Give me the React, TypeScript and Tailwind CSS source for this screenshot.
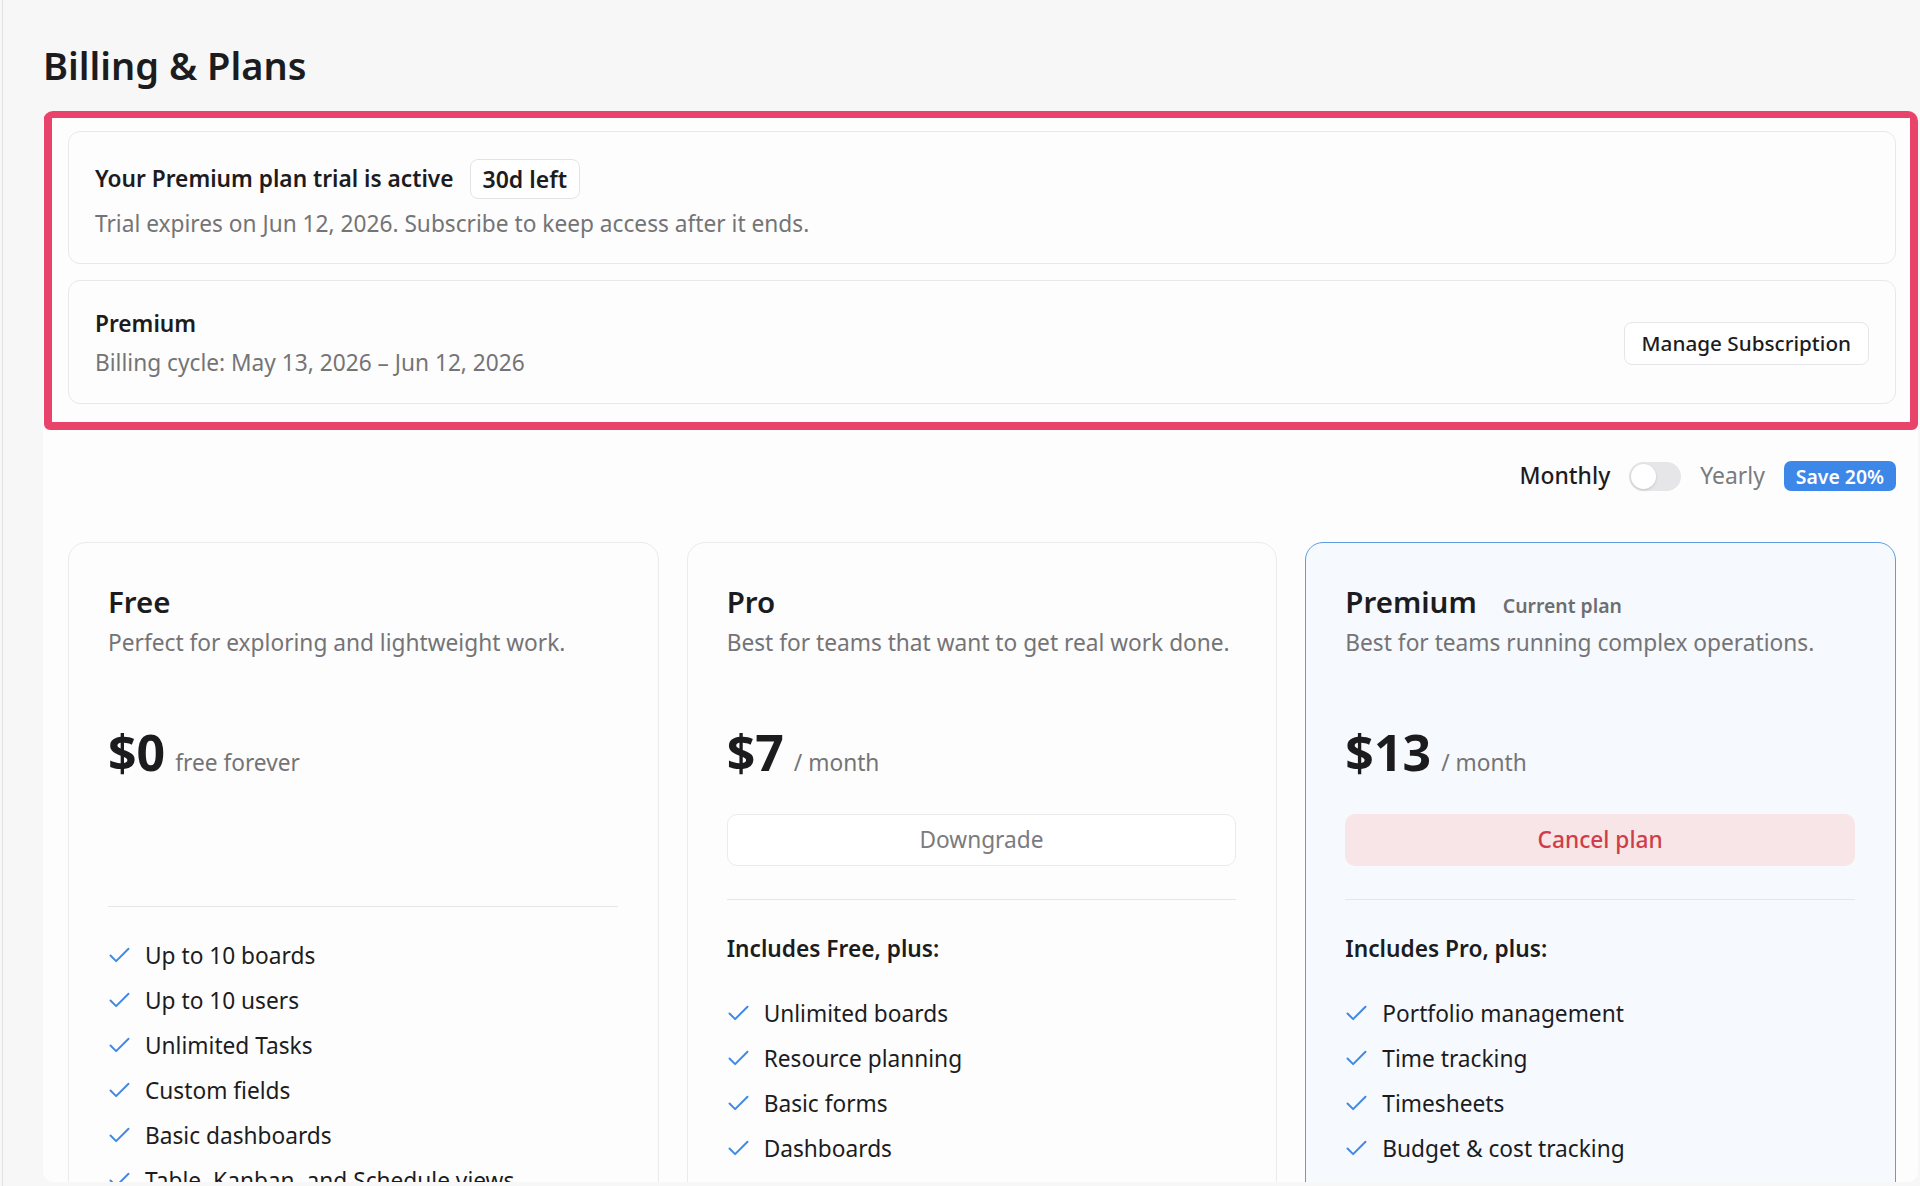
import { Check } from 'lucide-react';

type Plan = {
  name: string;
  desc: string;
  price: string;
  unit: string;
  current?: boolean;
  action?: 'downgrade' | 'cancel';
  includes?: string;
  features: string[];
};

const plans: Plan[] = [
  {
    name: 'Free',
    desc: 'Perfect for exploring and lightweight work.',
    price: '$0',
    unit: 'free forever',
    features: [
      'Up to 10 boards',
      'Up to 10 users',
      'Unlimited Tasks',
      'Custom fields',
      'Basic dashboards',
      'Table, Kanban, and Schedule views',
    ],
  },
  {
    name: 'Pro',
    desc: 'Best for teams that want to get real work done.',
    price: '$7',
    unit: '/ month',
    action: 'downgrade',
    includes: 'Includes Free, plus:',
    features: ['Unlimited boards', 'Resource planning', 'Basic forms', 'Dashboards', 'Automations'],
  },
  {
    name: 'Premium',
    desc: 'Best for teams running complex operations.',
    price: '$13',
    unit: '/ month',
    current: true,
    action: 'cancel',
    includes: 'Includes Pro, plus:',
    features: ['Portfolio management', 'Time tracking', 'Timesheets', 'Budget & cost tracking', 'Advanced reporting'],
  },
];

function PlanCard({ plan }: { plan: Plan }) {
  return (
    <div
      className={
        plan.current
          ? 'rounded-[18px] border-[1.5px] border-[#5d9ce0] bg-[#f6f9fd] pl-[39px] pr-10 pt-10 h-[700px]'
          : 'rounded-[18px] border border-[#ebebec] bg-[#fdfdfd] pl-[39px] pr-10 pt-10 h-[700px]'
      }
    >
      <div className="flex items-baseline gap-[26px]">
        <h3 className="text-[29.5px] leading-[38px] font-semibold text-[#1c1c1e]">{plan.name}</h3>
        {plan.current && <span className="text-[19.4px] font-semibold text-[#6e6e70]">Current plan</span>}
      </div>
      <p className="mt-[6px] text-[22.7px] leading-[32px] text-[#747476]">{plan.desc}</p>

      <div className="mt-[69px] flex items-baseline gap-[10px]">
        <span className="text-[50px] leading-[48px] font-bold text-[#1c1c1e]">{plan.price}</span>
        <span className="text-[22.7px] text-[#747476]">{plan.unit}</span>
      </div>

      {plan.action === 'downgrade' && (
        <button className="mt-[34px] h-[52px] w-full rounded-[10px] border border-[#ebebec] bg-white text-[22.7px] text-[#7b7b7d]">
          Downgrade
        </button>
      )}
      {plan.action === 'cancel' && (
        <button className="mt-[34px] h-[52px] w-full rounded-[10px] bg-[#f8e5e8] text-[22.7px] font-medium text-[#cf3e48]">
          Cancel plan
        </button>
      )}
      {!plan.action && <div className="h-[126px]" />}

      <div className={plan.action ? 'mt-[33px] border-t border-[#e6e6e8]' : 'border-t border-[#e6e6e8]'} />

      <div className="pt-[26px]">
        {plan.includes && (
          <div className="mb-[20px] flex h-[45px] items-center text-[22.7px] font-semibold text-[#1c1c1e]">
            {plan.includes}
          </div>
        )}
        <ul>
          {plan.features.map((f) => (
            <li key={f} className="flex h-[45px] items-center gap-3 text-[22.7px] text-[#1c1c1e]">
              <Check className="-ml-[2px] shrink-0 text-[#3f88e6]" size={27} strokeWidth={1.75} />
              <span>{f}</span>
            </li>
          ))}
        </ul>
      </div>
    </div>
  );
}

export default function App() {
  return (
    <div className="h-[1186px] w-[1920px] overflow-hidden bg-[#f7f7f8] pl-[2px]" style={{ fontFamily: '"Noto Sans", "Open Sans", sans-serif' }}>
      <div className="h-full border-l border-[#e1e1e3]">
        <h1 className="pl-[40px] pt-[41px] text-[38px] leading-[48px] font-semibold text-[#1c1c1e]">Billing &amp; Plans</h1>

        <div className="ml-[40px] mr-[2px] mt-[22px] h-[1071px] overflow-hidden rounded-[10px] bg-[#fdfdfe] pl-[25px] pr-[22px] pt-[20px]">
          {/* current subscription */}
          <div className="relative flex flex-col gap-4">
            <div className="rounded-[12px] border border-[#e8e8ea] bg-[#fdfdfd] px-[26px] pt-[27px] pb-[23px]">
              <div className="flex items-center gap-4">
                <span className="text-[22.7px] leading-[32px] font-semibold text-[#1c1c1e]">Your Premium plan trial is active</span>
                <span className="flex h-[40px] items-center rounded-[8px] border border-[#e3e3e5] bg-white px-[12px] text-[23px] font-semibold text-[#1c1c1e]">
                  30d left
                </span>
              </div>
              <p className="mt-[9px] text-[22.7px] leading-[32px] text-[#747476]">
                Trial expires on Jun 12, 2026. Subscribe to keep access after it ends.
              </p>
            </div>

            <div className="flex items-center justify-between rounded-[12px] border border-[#e8e8ea] bg-[#fdfdfd] px-[26px] pt-[27px] pb-[24px]">
              <div>
                <div className="text-[22.7px] leading-[32px] font-semibold text-[#1c1c1e]">Premium</div>
                <div className="mt-[7px] text-[22.7px] leading-[32px] text-[#747476]">Billing cycle: May 13, 2026 – Jun 12, 2026</div>
              </div>
              <button className="h-[43px] rounded-[8px] border border-[#e6e6e8] bg-white px-[17px] text-[20.7px] font-medium text-[#1c1c1e]">
                Manage Subscription
              </button>
            </div>

            {/* highlight overlay */}
            <div className="pointer-events-none absolute -left-[24px] -right-[22px] -top-[21px] -bottom-[26px] rounded-[6px] border-[8px] border-[#e9436b]" />
          </div>

          {/* billing period toggle */}
          <div className="mt-[55px] flex items-center justify-end gap-[19px]">
            <span className="text-[22.9px] font-medium text-[#1c1c1e]">Monthly</span>
            <div className="flex h-[29px] w-[52px] items-center rounded-full bg-[#e6e6e9] px-[2px]">
              <div className="h-[25px] w-[25px] rounded-full bg-white shadow-[0_1px_3px_rgba(0,0,0,0.15)]" />
            </div>
            <span className="text-[22.9px] text-[#7b7b7d]">Yearly</span>
            <span className="flex h-[30px] items-center rounded-[7px] bg-[#3d87e8] px-[12px] text-[19.4px] font-semibold text-white">
              Save 20%
            </span>
          </div>

          {/* plans */}
          <div className="mt-[49px] grid grid-cols-3 gap-[28px]">
            {plans.map((p) => (
              <PlanCard key={p.name} plan={p} />
            ))}
          </div>
        </div>
      </div>
    </div>
  );
}
